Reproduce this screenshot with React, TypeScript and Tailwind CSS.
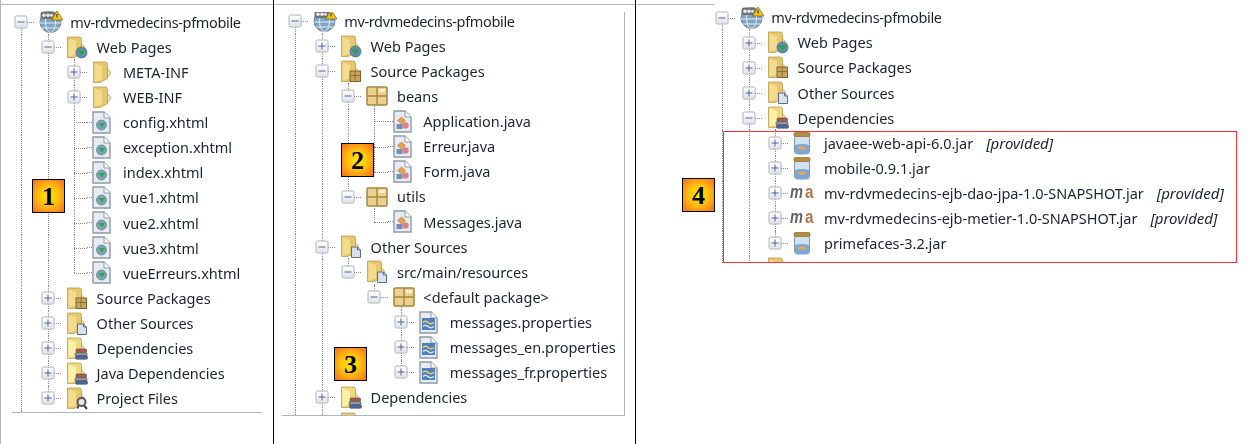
type IconName =
  | "project"
  | "web"
  | "folder"
  | "xhtml"
  | "src"
  | "other"
  | "deps"
  | "tools"
  | "pkg"
  | "java"
  | "props"
  | "jar"
  | "maven"
  | "none";

type Row = { cells: string; icon: IconName; label?: string; note?: string };

const Folder = ({ pale }: { pale?: boolean }) => (
  <>
    <path d="M15 8q3.500 1.500 3.500 4t-3.500 4z" fill="#f8ecc0" stroke="#bd9c4e" strokeWidth="0.8" />
    <path d="M1.500 1h12q2 0 2 2.500v14L8 21.500H1.500z" fill={pale ? "#efd97f" : "#e6c76e"} stroke="#bd9c4e" strokeWidth="0.8" />
    <path d="M2.500 2.500 10 5v13.500L2.500 20.500z" fill={pale ? "#fbf0a8" : "#f4dc8e"} />
  </>
);

const Icon = ({ name }: { name: IconName }) => {
  if (name === "project")
    return (
      <svg width="24" height="22" viewBox="0 0 24 22">
        <circle cx="11.500" cy="11" r="10.500" fill="#7fa5c2" stroke="#64859f" />
        <ellipse cx="11.500" cy="11" rx="5" ry="10.500" fill="none" stroke="#e2ecf4" />
        <path d="M1 12h21M2.500 17h18" stroke="#e2ecf4" />
        <rect x="1.500" y="0.500" width="14" height="7.500" rx="3" fill="#6d7175" />
        <circle cx="5" cy="4.200" r="1.800" fill="#e8e8e8" />
        <circle cx="9" cy="4.200" r="1.800" fill="#e8e8e8" />
        <circle cx="12.500" cy="4.200" r="1.500" fill="#e8e8e8" />
        <path d="M18 0 24 9H12.500z" fill="#f5c71a" stroke="#6f5a10" strokeWidth="0.7" />
        <path d="M18 3v3.500" stroke="#222" />
      </svg>
    );
  if (name === "folder" || name === "none")
    return (
      <svg width="19" height="22" viewBox="0 0 19 22">
        <Folder />
      </svg>
    );
  if (name === "web" || name === "src" || name === "other" || name === "deps" || name === "tools")
    return (
      <svg width="22" height="23" viewBox="0 0 22 23">
        <Folder pale={name === "deps"} />
        {name === "web" && (
          <>
            <circle cx="15.500" cy="16.500" r="5.500" fill="#5f8fb0" stroke="#3f6078" strokeWidth="0.7" />
            <path d="M12 14.500h7l-3.500 5.500z" fill="#2f9f45" />
          </>
        )}
        {name === "src" && (
          <>
            <rect x="10" y="11" width="10.500" height="10.500" fill="#c9a45a" stroke="#7c6430" />
            <path d="M15 11v10M10 15.500h10" stroke="#7c6430" strokeWidth="0.8" />
          </>
        )}
        {name === "other" && (
          <>
            <path d="M11.500 12h6l3 3v7.500h-9z" fill="#d8e2ec" stroke="#5d6f82" />
            <path d="M17.500 12v3h3" fill="none" stroke="#5d6f82" />
          </>
        )}
        {name === "deps" && (
          <>
            <rect x="10" y="12" width="10.500" height="3.600" rx="1.200" fill="#a85a50" stroke="#5a3a38" strokeWidth="0.6" />
            <rect x="9" y="15.600" width="12" height="3.300" rx="1.200" fill="#8f9aa0" stroke="#4e4e50" strokeWidth="0.6" />
            <rect x="9.500" y="18.900" width="12" height="3.300" rx="1.200" fill="#4f6a9c" stroke="#33415f" strokeWidth="0.6" />
          </>
        )}
        {name === "tools" && (
          <>
            <circle cx="15.500" cy="15" r="4" fill="#e4e6e8" stroke="#55585c" strokeWidth="2" />
            <path d="m12.500 18.500-1 3M18 18.500l3 3.500" stroke="#44474a" strokeWidth="2" />
          </>
        )}
      </svg>
    );
  if (name === "pkg")
    return (
      <svg width="22" height="20" viewBox="0 0 22 20">
        <rect x="1" y="1" width="20" height="18" rx="1" fill="#ecd08e" stroke="#a68742" strokeWidth="1.500" />
        <path d="M11 1v18M1 10h20" stroke="#a68742" strokeWidth="1.400" />
        <rect x="13" y="3" width="6" height="3" fill="#fbf1d0" />
      </svg>
    );
  if (name === "jar")
    return (
      <svg width="18" height="23" viewBox="0 0 18 23">
        <rect x="1.500" y="3" width="15" height="19" rx="3" fill="#cfe2f2" stroke="#8b9aaa" />
        <path d="M2 13q7-2 14 0v6a3 3 0 0 1-3 3H5a3 3 0 0 1-3-3z" fill="#7aa8d6" />
        <ellipse cx="9" cy="16" rx="4.500" ry="1.800" fill="#e0a468" />
        <rect x="1" y="0.500" width="16" height="4" rx="1.500" fill="#b88a3e" stroke="#7d5c22" strokeWidth="0.6" />
      </svg>
    );
  if (name === "maven")
    return (
      <svg width="25" height="24" viewBox="0 0 25 24" className="-ml-[3px]">
        <text x="0" y="17" textLength="13" lengthAdjust="spacingAndGlyphs" fontFamily="'Liberation Sans', sans-serif" fontStyle="italic" fontWeight="700" fontSize="19" fill="#5f6569">m</text>
        <text x="15" y="17" textLength="8.500" lengthAdjust="spacingAndGlyphs" fontFamily="'Liberation Sans', sans-serif" fontWeight="700" fontSize="18" fill="#b97448">a</text>
      </svg>
    );
  return (
    <svg width="19" height="23" viewBox="0 0 19 23">
      <path d="M1 1h11l6 6v15H1z" fill="#e6ecf2" stroke="#8f9ba8" strokeWidth="1.400" />
      <path d="M12 1v6h6" fill="#fff" stroke="#8f9ba8" />
      {name === "xhtml" && (
        <>
          <circle cx="9.500" cy="14" r="5" fill="#7ea2b8" stroke="#4f6f84" strokeWidth="0.6" />
          <path d="M6.500 12h6.500l-3 4.500z" fill="#2fa648" />
        </>
      )}
      {name === "java" && (
        <>
          <path d="m8.500 7 4 3.500-4 3.500-4-3.500z" fill="#e8a04a" stroke="#a86a2a" strokeWidth="0.5" />
          <rect x="3.500" y="14" width="6" height="5" fill="#6f8fb8" />
          <circle cx="12.500" cy="15.500" r="3.200" fill="#d9848c" />
        </>
      )}
      {name === "props" && (
        <>
          <rect x="3" y="7" width="13" height="12" fill="#4f7fc0" />
          <path d="M4 11.500q2.500-2.500 5 0t6 0" fill="none" stroke="#f2d24f" strokeWidth="1.500" />
          <path d="M4 15.500q2.500-2.500 5 0t6 0" fill="none" stroke="#dbe6f2" strokeWidth="1.500" />
        </>
      )}
    </svg>
  );
};

const VLine = ({ part = "full" }: { part?: "full" | "top" | "bottom" }) => (
  <div
    className={
      part === "full"
        ? "absolute left-1/2 top-0 h-full border-l border-dotted border-[#8f8f8f]"
        : part === "top"
          ? "absolute left-1/2 top-0 h-1/2 border-l border-dotted border-[#8f8f8f]"
          : "absolute left-1/2 top-1/2 h-1/2 border-l border-dotted border-[#8f8f8f]"
    }
  />
);

const HLine = () => (
  <div className="absolute left-1/2 top-1/2 w-1/2 border-t border-dotted border-[#8f8f8f]" />
);

const Expander = ({ open }: { open: boolean }) => (
  <div className="absolute left-1/2 top-1/2 flex h-[13px] w-[13px] -translate-x-1/2 -translate-y-1/2 items-center justify-center rounded-[2px] border-[1.5px] border-[#b0b0b0] bg-gradient-to-b from-white to-[#dfe3e8]">
    <div className="relative h-[7px] w-[7px]">
      <div className="absolute left-0 top-[3px] h-px w-[7px] bg-[#4a66a8]" />
      {!open && <div className="absolute left-[3px] top-0 h-[7px] w-px bg-[#4a66a8]" />}
    </div>
  </div>
);

// one character per indent column: | line, . blank, r root, + - expanders, P M last expanders, T tee, L elbow
const Cell = ({ kind }: { kind: string }) => (
  <div className="relative h-full w-[26.4px] shrink-0">
    {kind === "|" && <VLine />}
    {kind === "r" && <VLine part="bottom" />}
    {(kind === "+" || kind === "-" || kind === "T") && <VLine />}
    {(kind === "P" || kind === "M" || kind === "L") && <VLine part="top" />}
    {kind !== "|" && kind !== "." && <HLine />}
    {kind !== "|" && kind !== "." && kind !== "T" && kind !== "L" && (
      <Expander open={kind === "-" || kind === "r" || kind === "M"} />
    )}
  </div>
);

const TreeRow = ({ row }: { row: Row }) => {
  const last = row.cells[row.cells.length - 1];
  const open = last === "-" || last === "r" || last === "M";
  const leaf = last === "L" || last === "T";
  return (
    <div className="flex h-[25.1px] items-center text-[14.5px] leading-none text-[#1c2430]">
      {row.cells.split("").map((c, i) => (
        <Cell key={i} kind={c} />
      ))}
      <div className="relative flex h-full w-[35.8px] shrink-0 items-center pl-[5px]">
        {open && <div className="absolute left-[13.2px] top-1/2 h-1/2 border-l border-dotted border-[#8f8f8f]" />}
        <div className="relative flex w-[24px] items-center">
          {leaf && <div className="absolute left-[-5px] w-[5px] border-t border-dotted border-[#8f8f8f]" />}
          <div className="relative bg-white">
            <Icon name={row.icon} />
          </div>
        </div>
      </div>
      {row.label && (
        <span className={row.icon === "project" ? "whitespace-nowrap tracking-[-0.35px]" : "whitespace-nowrap"}>
          {row.label}
          {row.note && <i className="ml-[13px] text-[15px]">{row.note}</i>}
        </span>
      )}
    </div>
  );
};

const Badge = ({ n, className }: { n: number; className: string }) => (
  <div
    className={
      "absolute flex h-[34px] w-[33px] items-center justify-center border border-black bg-[radial-gradient(circle,#ffee00_0%,#ffc010_45%,#f76a20_100%)] font-['Liberation_Serif',serif] text-[26px] font-bold text-black " +
      className
    }
  >
    {n}
  </div>
);

const panelOne: Row[] = [
  { cells: "r", icon: "project", label: "mv-rdvmedecins-pfmobile" },
  { cells: "|-", icon: "web", label: "Web Pages" },
  { cells: "||+", icon: "folder", label: "META-INF" },
  { cells: "||+", icon: "folder", label: "WEB-INF" },
  { cells: "||T", icon: "xhtml", label: "config.xhtml" },
  { cells: "||T", icon: "xhtml", label: "exception.xhtml" },
  { cells: "||T", icon: "xhtml", label: "index.xhtml" },
  { cells: "||T", icon: "xhtml", label: "vue1.xhtml" },
  { cells: "||T", icon: "xhtml", label: "vue2.xhtml" },
  { cells: "||T", icon: "xhtml", label: "vue3.xhtml" },
  { cells: "||L", icon: "xhtml", label: "vueErreurs.xhtml" },
  { cells: "|+", icon: "src", label: "Source Packages" },
  { cells: "|+", icon: "other", label: "Other Sources" },
  { cells: "|+", icon: "deps", label: "Dependencies" },
  { cells: "|+", icon: "deps", label: "Java Dependencies" },
  { cells: "|P", icon: "tools", label: "Project Files" },
  { cells: "|", icon: "none" },
];

const panelTwo: Row[] = [
  { cells: "r", icon: "project", label: "mv-rdvmedecins-pfmobile" },
  { cells: "|+", icon: "web", label: "Web Pages" },
  { cells: "|-", icon: "src", label: "Source Packages" },
  { cells: "||-", icon: "pkg", label: "beans" },
  { cells: "|||T", icon: "java", label: "Application.java" },
  { cells: "|||T", icon: "java", label: "Erreur.java" },
  { cells: "|||L", icon: "java", label: "Form.java" },
  { cells: "||M", icon: "pkg", label: "utils" },
  { cells: "||.L", icon: "java", label: "Messages.java" },
  { cells: "|-", icon: "other", label: "Other Sources" },
  { cells: "||M", icon: "other", label: "src/main/resources" },
  { cells: "||.M", icon: "pkg", label: "<default package>" },
  { cells: "||..+", icon: "props", label: "messages.properties" },
  { cells: "||..+", icon: "props", label: "messages_en.properties" },
  { cells: "||..P", icon: "props", label: "messages_fr.properties" },
  { cells: "|+", icon: "deps", label: "Dependencies" },
  { cells: "||", icon: "none" },
];

const panelThree: Row[] = [
  { cells: "r", icon: "project", label: "mv-rdvmedecins-pfmobile" },
  { cells: "|+", icon: "web", label: "Web Pages" },
  { cells: "|+", icon: "src", label: "Source Packages" },
  { cells: "|+", icon: "other", label: "Other Sources" },
  { cells: "|-", icon: "deps", label: "Dependencies" },
  { cells: "||+", icon: "jar", label: "javaee-web-api-6.0.jar", note: "[provided]" },
  { cells: "||+", icon: "jar", label: "mobile-0.9.1.jar" },
  { cells: "||+", icon: "maven", label: "mv-rdvmedecins-ejb-dao-jpa-1.0-SNAPSHOT.jar", note: "[provided]" },
  { cells: "||+", icon: "maven", label: "mv-rdvmedecins-ejb-metier-1.0-SNAPSHOT.jar", note: "[provided]" },
  { cells: "||P", icon: "jar", label: "primefaces-3.2.jar" },
  { cells: "||", icon: "none" },
];

const Tree = ({ rows, className }: { rows: Row[]; className?: string }) => (
  <div className={"flex flex-col blur-[0.3px] " + (className ?? "")}>
    {rows.map((row, i) => (
      <TreeRow key={i} row={row} />
    ))}
  </div>
);

export default function App() {
  return (
    <div className="relative flex h-[444px] w-[1254px] overflow-hidden bg-white font-['Noto_Sans',sans-serif]">
      {/* first capture */}
      <div className="relative h-full w-[274px] shrink-0 border-l border-r border-l-[#b5b5b5] border-r-black">
        <div className="h-[5px] border-b border-[#b5b5b5]" />
        <div className="h-[407px] overflow-hidden pl-[7px] pt-[4.500px]">
          <Tree rows={panelOne} />
        </div>
        <div className="ml-[11px] mr-[11px] border-t border-[#b5b5b5]" />
        <Badge n={1} className="left-[31px] top-[179px]" />
      </div>

      {/* second capture */}
      <div className="relative h-full w-[362px] shrink-0 border-r border-black">
        <div className="h-[5px] border-b border-[#b5b5b5]" />
        <div className="ml-[8px] mr-[10px] mt-[7px] h-[404px] overflow-hidden border-r border-b border-[#b5b5b5]">
          <Tree rows={panelTwo} className="-mt-[3.500px]" />
        </div>
        <Badge n={2} className="left-[67px] top-[143px]" />
        <Badge n={3} className="left-[60px] top-[347px]" />
      </div>

      {/* third capture */}
      <div className="relative h-full flex-1">
        <div className="h-[5px] w-[78px] border-b border-[#b5b5b5]" />
        <div className="ml-[73px] h-[258px] overflow-hidden">
          <Tree rows={panelThree} />
        </div>
        <div className="absolute left-[87px] top-[131px] h-[132px] w-[514px] border-[1.5px] border-[#ff3038]" />
        <Badge n={4} className="left-[46px] top-[178px]" />
      </div>
    </div>
  );
}
